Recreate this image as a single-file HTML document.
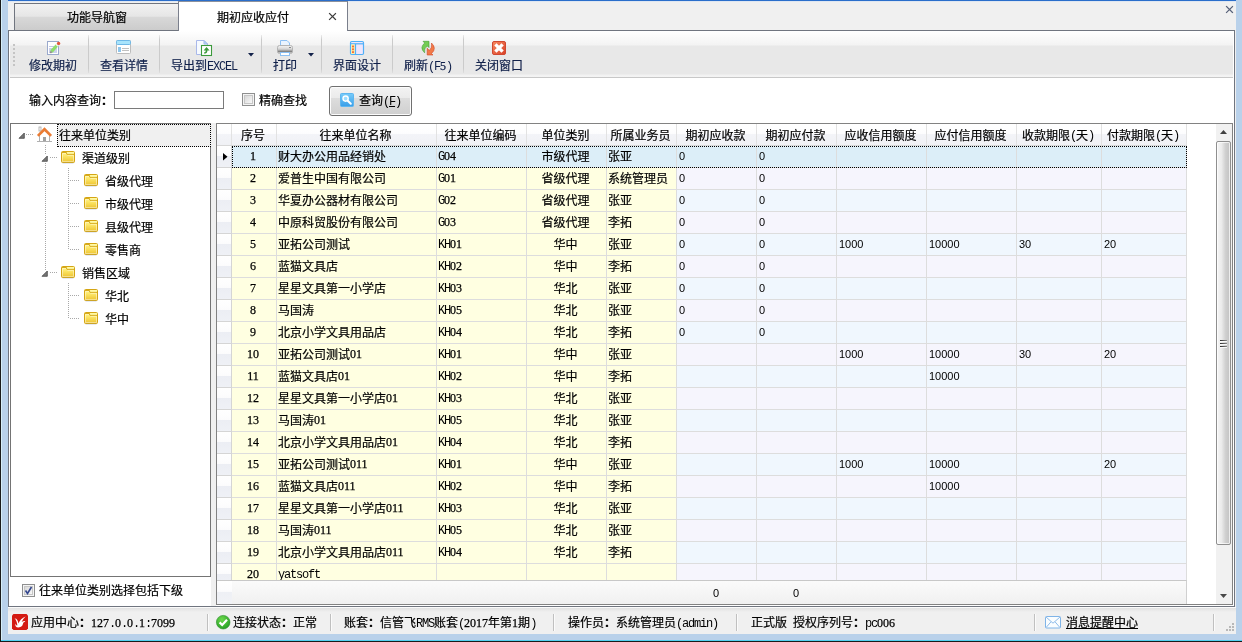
<!DOCTYPE html>
<html lang="zh-CN"><head><meta charset="utf-8"><title>期初应收应付</title>
<style>
html,body{margin:0;padding:0;}
body{width:1242px;height:642px;overflow:hidden;position:relative;background:#f0f0f0;
 font-family:"Liberation Sans","Noto Sans CJK SC",sans-serif;font-size:12px;line-height:14px;color:#000;-webkit-text-stroke:0.2px currentColor;}
.m,.n{-webkit-text-stroke:0;}
.d{-webkit-text-stroke:0.25px currentColor;}
div,span{box-sizing:border-box;}
#app{position:absolute;left:0;top:0;width:1242px;height:642px;will-change:transform;}
.a{position:absolute;}
.t{position:absolute;white-space:nowrap;height:14px;line-height:14px;margin-top:1px;}
.m{font-family:"Liberation Mono",monospace;font-size:12px;letter-spacing:-1.2px;}
.n{font-family:"Liberation Sans",sans-serif;font-size:11px;}
.d{font-family:"Liberation Serif",serif;font-size:12px;}
.tb{color:#10204a;}
.sep{position:absolute;top:35px;width:1px;height:38px;background:linear-gradient(rgba(200,200,200,.3),#cbcbcb 12%,#cbcbcb 88%,rgba(200,200,200,.3));}
.ssep{position:absolute;top:614px;width:2px;height:17px;border-left:1px solid #c0c0c0;border-right:1px solid #fbfbfb;}
svg{position:absolute;overflow:visible;}
.hc{position:absolute;top:124px;height:21px;border-right:1px solid #e2e2e2;background:linear-gradient(#ffffff 0%,#fdfdfe 45%,#f3f4f8 50%,#f0f1f5 100%);text-align:center;line-height:21px;padding-top:2px;padding-right:2px;white-space:nowrap;}
.row{position:absolute;left:217px;width:970px;height:22px;}
.c{position:absolute;top:0;height:22px;border-right:1px solid #dddddd;border-bottom:1px solid #dddddd;line-height:21px;white-space:nowrap;padding-left:1px;padding-top:1px;overflow:hidden;}
.hc .m{position:relative;top:-1px;}
.c .m,.c .d{position:relative;top:-1px;}
.c .n{position:relative;top:-1px;}
.y{background:#ffffe1;}
.b1{background:#f0f7fe;}
.b2{background:#f6f5fd;}
.sel .c:not(.ind){background:#dceef8;}
.ind{background:linear-gradient(#ffffff 0%,#fcfcfd 45%,#eceef4 50%,#eff1f6 100%);border-right:1px solid #d5d5d5;border-bottom:1px solid #d5d5d5;}
.c.ctr{text-align:center;padding-left:0;padding-right:2px;}
.c.num{padding-left:2px;}
.tn{position:absolute;white-space:nowrap;height:14px;line-height:14px;margin-top:1px;}
.hd{position:absolute;height:1px;background-image:linear-gradient(90deg,#a8a8a8 50%,transparent 50%);background-size:2px 1px;}
.vd{position:absolute;width:1px;background-image:linear-gradient(180deg,#a8a8a8 50%,transparent 50%);background-size:1px 2px;}
</style></head>
<body>
<svg width="0" height="0" style="position:absolute"><defs>
<linearGradient id="fg" x1="0" y1="0" x2="0" y2="1"><stop offset="0" stop-color="#fff38e"/><stop offset="0.35" stop-color="#fde96c"/><stop offset="1" stop-color="#edc22e"/></linearGradient>

</defs></svg>
<div id="app">
<div class="a" style="left:0;top:0;width:8px;height:642px;background:#b9d1ea;"></div>
<div class="a" style="left:0;top:0;width:1px;height:642px;background:#1a1a1a;"></div>
<div class="a" style="left:1px;top:0;width:1px;height:642px;background:#d6eef8;"></div>
<div class="a" style="left:1236px;top:0;width:6px;height:642px;background:#b9d1ea;"></div>
<div class="a" style="left:2px;top:634px;width:1240px;height:8px;background:#b9d1ea;"></div>
<div class="a" style="left:1px;top:640px;width:1241px;height:1px;background:#52d0f0;"></div>
<div class="a" style="left:0;top:641px;width:1242px;height:1px;background:#1a1a1a;"></div>
<div class="a" style="left:8px;top:0;width:1228px;height:1px;background:#2a6ecb;"></div>
<div class="a" style="left:8px;top:1px;width:1228px;height:1px;background:#dfe7f2;"></div>
<div class="a" style="left:14px;top:3px;width:165px;height:28px;border:1px solid #70757f;border-bottom:none;background:linear-gradient(#f2f2f2 0%,#e6e6e6 45%,#d8d8d8 50%,#cbcbcb 100%);"></div>
<div class="t" style="left:67px;top:10px;">功能导航窗</div>
<div class="a" style="left:8px;top:30px;width:1227px;height:577px;border:1px solid #70757f;background:#fff;"></div>
<div class="a" style="left:178px;top:1px;width:170px;height:30px;border-right:1px solid #7a7f8c;border-left:1px solid #7a7f8c;border-top:1px solid #8c919c;background:#fff;"></div>
<div class="t" style="left:217px;top:10px;">期初应收应付</div>
<svg style="left:329px;top:13px;" width="8" height="8"><path d="M0.5 0.5L6.5 6.5M6.5 0.5L0.5 6.5" stroke="#3c3c3c" stroke-width="1.15" stroke-linecap="square" fill="none"/></svg>
<svg style="left:1226px;top:6px;" width="8" height="8"><path d="M0.5 0.5L6.5 6.5M6.5 0.5L0.5 6.5" stroke="#566078" stroke-width="1.15" stroke-linecap="square" fill="none"/></svg>
<div class="a" style="left:10px;top:31px;width:1223px;height:46px;background:linear-gradient(#ffffff 0px,#f3f3f3 14px,#e8e8e8 15px,#e8e8e8 43px,#f2f2f2 44px,#f4f4f4 46px);"></div>
<div class="a" style="left:10px;top:77px;width:1223px;height:1px;background:#c8c8c8;"></div>
<div class="a" style="left:13px;top:44px;width:2px;height:2px;background:#c4c4c4;"></div>
<div class="a" style="left:13px;top:48px;width:2px;height:2px;background:#c4c4c4;"></div>
<div class="a" style="left:13px;top:52px;width:2px;height:2px;background:#c4c4c4;"></div>
<div class="a" style="left:13px;top:56px;width:2px;height:2px;background:#c4c4c4;"></div>
<div class="a" style="left:13px;top:60px;width:2px;height:2px;background:#c4c4c4;"></div>
<div class="a" style="left:13px;top:64px;width:2px;height:2px;background:#c4c4c4;"></div>
<div class="sep" style="left:88px;"></div>
<div class="sep" style="left:159px;"></div>
<div class="sep" style="left:261px;"></div>
<div class="sep" style="left:321px;"></div>
<div class="sep" style="left:392px;"></div>
<div class="sep" style="left:463px;"></div>
<div class="t tb" style="left:29px;top:58px;">修改期初</div>
<div class="t tb" style="left:100px;top:58px;">查看详情</div>
<div class="t tb" style="left:171px;top:58px;">导出到<span class="m">EXCEL</span></div>
<div class="t tb" style="left:273px;top:58px;">打印</div>
<div class="t tb" style="left:333px;top:58px;">界面设计</div>
<div class="t tb" style="left:404px;top:58px;">刷新<span class="m">(F</span><span class="d">5</span><span class="m">)</span></div>
<div class="t tb" style="left:475px;top:58px;">关闭窗口</div>
<svg style="left:248px;top:53px;" width="6" height="4"><path d="M0 0H6L3 3.5Z" fill="#14234b"/></svg>
<svg style="left:308px;top:53px;" width="6" height="4"><path d="M0 0H6L3 3.5Z" fill="#14234b"/></svg>
<div class="t" style="left:29px;top:93px;">输入内容查询<b>：</b></div>
<div class="a" style="left:114px;top:91px;width:110px;height:18px;border:1px solid #7a7a7a;background:#fff;"></div>
<div class="a" style="left:242px;top:93px;width:13px;height:13px;border:1px solid #8e8f8f;background:#f4f4f4;"><div class="a" style="left:1px;top:1px;width:9px;height:9px;border:1px solid #c6c6c6;background:linear-gradient(135deg,#d8d8d8,#f8f8f8);"></div></div>
<div class="t" style="left:259px;top:93px;">精确查找</div>
<div class="a" style="left:329px;top:86px;width:83px;height:30px;border:1px solid #707070;border-radius:3px;background:linear-gradient(#f3f3f3 0%,#ebebeb 38%,#dddddd 40%,#cfcfcf 100%);box-shadow:inset 0 0 0 1px #fcfcfc;"></div>
<div class="t" style="left:359px;top:93px;">查询<span class="m">(<u>F</u>)</span></div>

<svg style="left:45px;top:40px;" width="16" height="16" viewBox="0 0 16 16"><rect x="2.5" y="1.5" width="11" height="13" fill="#fff" stroke="#9aa9cc"/><rect x="4" y="8" width="8" height="5" fill="#ccd1ec"/><path d="M4 6.5H9" stroke="#c0c8e4"/><path d="M6.4 11.6L12 5.2" stroke="#8ede6c" stroke-width="3.2"/><path d="M11.6 5.7L12.7 4.4" stroke="#f0f4f0" stroke-width="3.2"/><circle cx="13.6" cy="3.4" r="1.7" fill="#e2583c"/><path d="M5.3 12.9L6.5 11.5" stroke="#8a8a80" stroke-width="1.8"/></svg>
<svg style="left:116px;top:40px;" width="16" height="16" viewBox="0 0 16 16"><rect x="0.5" y="0.5" width="14" height="13" rx="1" fill="#fff" stroke="#bcbcbc"/><rect x="0.5" y="0.5" width="14" height="4" rx="1" fill="#a8e4fc" stroke="#6fb8e6"/><rect x="2" y="7" width="3" height="5" fill="#8fc6ec"/><path d="M6 8.5H13M6 10.5H13" stroke="#c0c0c0"/></svg>
<svg style="left:196px;top:40px;" width="17" height="16" viewBox="0 0 17 16"><path d="M0.5 0.5H8L11.5 4V14.5H0.5Z" fill="#f6faff" stroke="#a9b8ea"/><path d="M8 0.5V4H11.5Z" fill="#a8dcfc" stroke="#a9b8ea"/><rect x="5.5" y="5.5" width="10" height="10" fill="#fff" stroke="#3c9a3c" stroke-width="1.1"/><path d="M10.5 7L13.6 10.4H11.4Q11.4 13.6 8 13.6V12.6Q9.8 12.4 9.8 10.4H7.6Z" fill="#3c9a3c"/></svg>
<svg style="left:277px;top:40px;" width="16" height="16" viewBox="0 0 16 16"><defs><linearGradient id="pg" x1="0" y1="0" x2="0" y2="1"><stop offset="0" stop-color="#f6f6f6"/><stop offset="0.45" stop-color="#d4d4d4"/><stop offset="0.78" stop-color="#7c7c7c"/><stop offset="0.9" stop-color="#c8c8c8"/><stop offset="1" stop-color="#e8e8e8"/></linearGradient></defs><path d="M3.5 0.5H10L12.5 3V6H3.5Z" fill="#eaf4ff" stroke="#8cc0f4"/><rect x="0.5" y="5.5" width="15" height="8" rx="2" fill="url(#pg)" stroke="#b4b4b4"/><rect x="3.5" y="12.5" width="9" height="3" fill="#fff" stroke="#8cc0f4"/><rect x="12.5" y="7" width="1" height="1" fill="#333"/></svg>
<svg style="left:350px;top:41px;" width="15" height="15" viewBox="0 0 15 15"><rect x="0.5" y="0.5" width="13" height="13" rx="1.2" fill="#eee6fc" stroke="#4fb0f8" stroke-width="1.2"/><path d="M0.5 2.8H13.5" stroke="#4fb0f8" stroke-width="1.2"/><rect x="1.2" y="3.4" width="3.6" height="9.6" fill="#fdf0a0"/><path d="M5.5 3V13.5" stroke="#4fb0f8" stroke-width="1.2"/><rect x="2" y="4.6" width="2" height="1.8" fill="#f8703c"/><rect x="2" y="7.4" width="2" height="1.8" fill="#f8703c"/><rect x="2" y="10.2" width="2" height="1.8" fill="#f8703c"/></svg>
<svg style="left:420px;top:40px;" width="16" height="16" viewBox="0 0 16 16"><path d="M3 1.3H9V7.6L7.3 5.9Q3.6 8.4 4.6 12.8Q-0.8 7.6 4.7 3Z" fill="#74cc54" stroke="#3fa030" stroke-width="0.6"/><path d="M13 15H7.2V8.2L9.3 10.5Q12.4 8 11.5 3Q17.2 8.5 11.5 13.5Z" fill="#f27a48" stroke="#d04424" stroke-width="0.6"/></svg>
<svg style="left:492px;top:41px;" width="15" height="15" viewBox="0 0 15 15"><defs><linearGradient id="rg" x1="0" y1="0" x2="1" y2="1"><stop offset="0" stop-color="#f88a60"/><stop offset="1" stop-color="#d84028"/></linearGradient></defs><rect x="0.5" y="0.5" width="13" height="13" rx="1.5" fill="url(#rg)" stroke="#d04830"/><path d="M3.4 3.4L10.6 10.6M10.6 3.4L3.4 10.6" stroke="#fff" stroke-width="3.3"/></svg>
<svg style="left:340px;top:93px;" width="14" height="14" viewBox="0 0 14 14"><defs><linearGradient id="bg" x1="0" y1="0" x2="0" y2="1"><stop offset="0" stop-color="#78ccfa"/><stop offset="1" stop-color="#3a9ee8"/></linearGradient></defs><rect x="0.5" y="0.5" width="13" height="13" rx="1" fill="url(#bg)" stroke="#5eb6f0"/><circle cx="5.6" cy="5.6" r="2.6" fill="#9cdcff" stroke="#fff" stroke-width="1.4"/><path d="M7.8 7.8L10.8 10.8" stroke="#fff" stroke-width="2" stroke-linecap="round"/></svg>

<div class="a" style="left:10px;top:123px;width:201px;height:454px;border:1px solid #747474;background:#fff;"></div>
<div class="a" style="left:57px;top:124px;width:154px;height:23px;border:1px dotted #000;background:#f0f0f0;"></div>
<div class="tn" style="left:59px;top:128px;">往来单位类别</div>
<svg style="left:18px;top:132px;" width="7" height="7"><path d="M6.3 1V6.3H1Z" fill="#777" stroke="#484848" stroke-width="0.8"/></svg>
<div class="hd" style="left:26px;top:134px;width:8px;"></div>
<svg style="left:36px;top:126px;" width="17" height="16" viewBox="0 0 17 16"><rect x="3" y="1" width="2" height="4" fill="#fff" stroke="#a8a8a8" stroke-width="0.8"/><path d="M3.5 8.5V15.5H13.5V8.5L8.5 4Z" fill="#fff" stroke="#b0b0b0"/><rect x="7" y="11" width="3" height="4.5" fill="#a0a0a0"/><path d="M1 15.5H16" stroke="#b0b0b0"/><path d="M1.9 9.9L8.5 3.2L15.1 9.9" stroke="#ea7c34" stroke-width="2.7" fill="none" stroke-linejoin="miter"/></svg>
<div class="tn" style="left:82px;top:151px;">渠道级别</div>
<svg style="left:41px;top:155px;" width="7" height="7"><path d="M6.3 1V6.3H1Z" fill="#777" stroke="#484848" stroke-width="0.8"/></svg>
<div class="hd" style="left:50px;top:157px;width:8px;"></div>
<svg style="left:61px;top:151px;" width="14" height="12"><rect x="0.5" y="0.5" width="13" height="11" rx="1" fill="url(#fg)" stroke="#d4a514"/><rect x="1" y="1" width="4.4" height="1" fill="#d9ab1c"/><rect x="6.2" y="1.1" width="6.8" height="1.8" fill="#fffaa8"/><path d="M5 1.2L6 3.4H13" stroke="#d4a514" stroke-width="0.9" fill="none"/><path d="M1.5 10.5V2.6H5M6.4 4.4H12.5V10.5H1.5" stroke="rgba(255,255,255,.55)" stroke-width="0.8" fill="none"/><path d="M1.5 12.2H12.5" stroke="rgba(150,165,200,.45)" stroke-width="0.8"/></svg>
<div class="tn" style="left:105px;top:174px;">省级代理</div>
<div class="hd" style="left:70px;top:180px;width:10px;"></div>
<svg style="left:84px;top:174px;" width="14" height="12"><rect x="0.5" y="0.5" width="13" height="11" rx="1" fill="url(#fg)" stroke="#d4a514"/><rect x="1" y="1" width="4.4" height="1" fill="#d9ab1c"/><rect x="6.2" y="1.1" width="6.8" height="1.8" fill="#fffaa8"/><path d="M5 1.2L6 3.4H13" stroke="#d4a514" stroke-width="0.9" fill="none"/><path d="M1.5 10.5V2.6H5M6.4 4.4H12.5V10.5H1.5" stroke="rgba(255,255,255,.55)" stroke-width="0.8" fill="none"/><path d="M1.5 12.2H12.5" stroke="rgba(150,165,200,.45)" stroke-width="0.8"/></svg>
<div class="tn" style="left:105px;top:197px;">市级代理</div>
<div class="hd" style="left:70px;top:203px;width:10px;"></div>
<svg style="left:84px;top:197px;" width="14" height="12"><rect x="0.5" y="0.5" width="13" height="11" rx="1" fill="url(#fg)" stroke="#d4a514"/><rect x="1" y="1" width="4.4" height="1" fill="#d9ab1c"/><rect x="6.2" y="1.1" width="6.8" height="1.8" fill="#fffaa8"/><path d="M5 1.2L6 3.4H13" stroke="#d4a514" stroke-width="0.9" fill="none"/><path d="M1.5 10.5V2.6H5M6.4 4.4H12.5V10.5H1.5" stroke="rgba(255,255,255,.55)" stroke-width="0.8" fill="none"/><path d="M1.5 12.2H12.5" stroke="rgba(150,165,200,.45)" stroke-width="0.8"/></svg>
<div class="tn" style="left:105px;top:220px;">县级代理</div>
<div class="hd" style="left:70px;top:226px;width:10px;"></div>
<svg style="left:84px;top:220px;" width="14" height="12"><rect x="0.5" y="0.5" width="13" height="11" rx="1" fill="url(#fg)" stroke="#d4a514"/><rect x="1" y="1" width="4.4" height="1" fill="#d9ab1c"/><rect x="6.2" y="1.1" width="6.8" height="1.8" fill="#fffaa8"/><path d="M5 1.2L6 3.4H13" stroke="#d4a514" stroke-width="0.9" fill="none"/><path d="M1.5 10.5V2.6H5M6.4 4.4H12.5V10.5H1.5" stroke="rgba(255,255,255,.55)" stroke-width="0.8" fill="none"/><path d="M1.5 12.2H12.5" stroke="rgba(150,165,200,.45)" stroke-width="0.8"/></svg>
<div class="tn" style="left:105px;top:243px;">零售商</div>
<div class="hd" style="left:70px;top:249px;width:10px;"></div>
<svg style="left:84px;top:243px;" width="14" height="12"><rect x="0.5" y="0.5" width="13" height="11" rx="1" fill="url(#fg)" stroke="#d4a514"/><rect x="1" y="1" width="4.4" height="1" fill="#d9ab1c"/><rect x="6.2" y="1.1" width="6.8" height="1.8" fill="#fffaa8"/><path d="M5 1.2L6 3.4H13" stroke="#d4a514" stroke-width="0.9" fill="none"/><path d="M1.5 10.5V2.6H5M6.4 4.4H12.5V10.5H1.5" stroke="rgba(255,255,255,.55)" stroke-width="0.8" fill="none"/><path d="M1.5 12.2H12.5" stroke="rgba(150,165,200,.45)" stroke-width="0.8"/></svg>
<div class="tn" style="left:82px;top:266px;">销售区域</div>
<svg style="left:41px;top:270px;" width="7" height="7"><path d="M6.3 1V6.3H1Z" fill="#777" stroke="#484848" stroke-width="0.8"/></svg>
<div class="hd" style="left:50px;top:272px;width:8px;"></div>
<svg style="left:61px;top:266px;" width="14" height="12"><rect x="0.5" y="0.5" width="13" height="11" rx="1" fill="url(#fg)" stroke="#d4a514"/><rect x="1" y="1" width="4.4" height="1" fill="#d9ab1c"/><rect x="6.2" y="1.1" width="6.8" height="1.8" fill="#fffaa8"/><path d="M5 1.2L6 3.4H13" stroke="#d4a514" stroke-width="0.9" fill="none"/><path d="M1.5 10.5V2.6H5M6.4 4.4H12.5V10.5H1.5" stroke="rgba(255,255,255,.55)" stroke-width="0.8" fill="none"/><path d="M1.5 12.2H12.5" stroke="rgba(150,165,200,.45)" stroke-width="0.8"/></svg>
<div class="tn" style="left:105px;top:289px;">华北</div>
<div class="hd" style="left:70px;top:295px;width:10px;"></div>
<svg style="left:84px;top:289px;" width="14" height="12"><rect x="0.5" y="0.5" width="13" height="11" rx="1" fill="url(#fg)" stroke="#d4a514"/><rect x="1" y="1" width="4.4" height="1" fill="#d9ab1c"/><rect x="6.2" y="1.1" width="6.8" height="1.8" fill="#fffaa8"/><path d="M5 1.2L6 3.4H13" stroke="#d4a514" stroke-width="0.9" fill="none"/><path d="M1.5 10.5V2.6H5M6.4 4.4H12.5V10.5H1.5" stroke="rgba(255,255,255,.55)" stroke-width="0.8" fill="none"/><path d="M1.5 12.2H12.5" stroke="rgba(150,165,200,.45)" stroke-width="0.8"/></svg>
<div class="tn" style="left:105px;top:312px;">华中</div>
<div class="hd" style="left:70px;top:318px;width:10px;"></div>
<svg style="left:84px;top:312px;" width="14" height="12"><rect x="0.5" y="0.5" width="13" height="11" rx="1" fill="url(#fg)" stroke="#d4a514"/><rect x="1" y="1" width="4.4" height="1" fill="#d9ab1c"/><rect x="6.2" y="1.1" width="6.8" height="1.8" fill="#fffaa8"/><path d="M5 1.2L6 3.4H13" stroke="#d4a514" stroke-width="0.9" fill="none"/><path d="M1.5 10.5V2.6H5M6.4 4.4H12.5V10.5H1.5" stroke="rgba(255,255,255,.55)" stroke-width="0.8" fill="none"/><path d="M1.5 12.2H12.5" stroke="rgba(150,165,200,.45)" stroke-width="0.8"/></svg>
<div class="vd" style="left:45px;top:145px;height:10px;"></div>
<div class="vd" style="left:45px;top:163px;height:107px;"></div>
<div class="vd" style="left:68px;top:168px;height:82px;"></div>
<div class="vd" style="left:68px;top:283px;height:36px;"></div>
<div class="a" style="left:22px;top:584px;width:13px;height:13px;border:1px solid #8e8f8f;background:#f4f4f4;"><div class="a" style="left:1px;top:1px;width:9px;height:9px;border:1px solid #c6c6c6;background:linear-gradient(135deg,#d8d8d8,#f8f8f8);"></div><svg style="left:1px;top:1px;" width="9" height="9"><path d="M1.5 4.5L3.5 7.5L7.5 1" stroke="#34478e" stroke-width="1.6" fill="none"/></svg></div>
<div class="t" style="left:39px;top:583px;">往来单位类别选择包括下级</div>
<div class="a" style="left:211px;top:123px;width:5px;height:483px;background:#f0f0f0;"></div>
<div class="a" style="left:216px;top:123px;width:1017px;height:482px;border:1px solid #828282;background:#fff;"></div>
<div class="hc" style="left:217px;width:15px;"></div>
<div class="hc" style="left:232px;width:45px;">序号</div>
<div class="hc" style="left:277px;width:160px;">往来单位名称</div>
<div class="hc" style="left:437px;width:90px;">往来单位编码</div>
<div class="hc" style="left:527px;width:80px;">单位类别</div>
<div class="hc" style="left:607px;width:70px;">所属业务员</div>
<div class="hc" style="left:677px;width:80px;">期初应收款</div>
<div class="hc" style="left:757px;width:80px;">期初应付款</div>
<div class="hc" style="left:837px;width:90px;">应收信用额度</div>
<div class="hc" style="left:927px;width:90px;">应付信用额度</div>
<div class="hc" style="left:1017px;width:85px;">收款期限<span class="m">(</span>天<span class="m">)</span></div>
<div class="hc" style="left:1102px;width:85px;">付款期限<span class="m">(</span>天<span class="m">)</span></div>
<div class="a" style="left:217px;top:145px;width:970px;height:1px;background:#d8d8d8;"></div>
<div class="a" style="left:217px;top:146px;width:970px;height:434px;overflow:hidden;">
<div class="row sel" style="left:0;top:0px;">
<div class="c ind" style="left:0;width:15px;padding:0;"></div>
<div class="c y ctr" style="left:15px;width:45px;"><span class="d">1</span></div>
<div class="c y" style="left:60px;width:160px;">财大办公用品经销处</div>
<div class="c y" style="left:220px;width:90px;"><span class="m">G</span><span class="d">04</span></div>
<div class="c y ctr" style="left:310px;width:80px;">市级代理</div>
<div class="c y" style="left:390px;width:70px;">张亚</div>
<div class="c num b1" style="left:460px;width:80px;"><span class="n">0</span></div>
<div class="c num b1" style="left:540px;width:80px;"><span class="n">0</span></div>
<div class="c num b1" style="left:620px;width:90px;"></div>
<div class="c num b1" style="left:710px;width:90px;"></div>
<div class="c num b1" style="left:800px;width:85px;"></div>
<div class="c num b1" style="left:885px;width:85px;"></div>
</div>
<div class="row" style="left:0;top:22px;">
<div class="c ind" style="left:0;width:15px;padding:0;"></div>
<div class="c y ctr" style="left:15px;width:45px;"><span class="d">2</span></div>
<div class="c y" style="left:60px;width:160px;">爱普生中国有限公司</div>
<div class="c y" style="left:220px;width:90px;"><span class="m">G</span><span class="d">01</span></div>
<div class="c y ctr" style="left:310px;width:80px;">省级代理</div>
<div class="c y" style="left:390px;width:70px;">系统管理员</div>
<div class="c num b2" style="left:460px;width:80px;"><span class="n">0</span></div>
<div class="c num b2" style="left:540px;width:80px;"><span class="n">0</span></div>
<div class="c num b2" style="left:620px;width:90px;"></div>
<div class="c num b2" style="left:710px;width:90px;"></div>
<div class="c num b2" style="left:800px;width:85px;"></div>
<div class="c num b2" style="left:885px;width:85px;"></div>
</div>
<div class="row" style="left:0;top:44px;">
<div class="c ind" style="left:0;width:15px;padding:0;"></div>
<div class="c y ctr" style="left:15px;width:45px;"><span class="d">3</span></div>
<div class="c y" style="left:60px;width:160px;">华夏办公器材有限公司</div>
<div class="c y" style="left:220px;width:90px;"><span class="m">G</span><span class="d">02</span></div>
<div class="c y ctr" style="left:310px;width:80px;">省级代理</div>
<div class="c y" style="left:390px;width:70px;">张亚</div>
<div class="c num b1" style="left:460px;width:80px;"><span class="n">0</span></div>
<div class="c num b1" style="left:540px;width:80px;"><span class="n">0</span></div>
<div class="c num b1" style="left:620px;width:90px;"></div>
<div class="c num b1" style="left:710px;width:90px;"></div>
<div class="c num b1" style="left:800px;width:85px;"></div>
<div class="c num b1" style="left:885px;width:85px;"></div>
</div>
<div class="row" style="left:0;top:66px;">
<div class="c ind" style="left:0;width:15px;padding:0;"></div>
<div class="c y ctr" style="left:15px;width:45px;"><span class="d">4</span></div>
<div class="c y" style="left:60px;width:160px;">中原科贸股份有限公司</div>
<div class="c y" style="left:220px;width:90px;"><span class="m">G</span><span class="d">03</span></div>
<div class="c y ctr" style="left:310px;width:80px;">省级代理</div>
<div class="c y" style="left:390px;width:70px;">李拓</div>
<div class="c num b2" style="left:460px;width:80px;"><span class="n">0</span></div>
<div class="c num b2" style="left:540px;width:80px;"><span class="n">0</span></div>
<div class="c num b2" style="left:620px;width:90px;"></div>
<div class="c num b2" style="left:710px;width:90px;"></div>
<div class="c num b2" style="left:800px;width:85px;"></div>
<div class="c num b2" style="left:885px;width:85px;"></div>
</div>
<div class="row" style="left:0;top:88px;">
<div class="c ind" style="left:0;width:15px;padding:0;"></div>
<div class="c y ctr" style="left:15px;width:45px;"><span class="d">5</span></div>
<div class="c y" style="left:60px;width:160px;">亚拓公司测试</div>
<div class="c y" style="left:220px;width:90px;"><span class="m">KH</span><span class="d">01</span></div>
<div class="c y ctr" style="left:310px;width:80px;">华中</div>
<div class="c y" style="left:390px;width:70px;">张亚</div>
<div class="c num b1" style="left:460px;width:80px;"><span class="n">0</span></div>
<div class="c num b1" style="left:540px;width:80px;"><span class="n">0</span></div>
<div class="c num b1" style="left:620px;width:90px;"><span class="n">1000</span></div>
<div class="c num b1" style="left:710px;width:90px;"><span class="n">10000</span></div>
<div class="c num b1" style="left:800px;width:85px;"><span class="n">30</span></div>
<div class="c num b1" style="left:885px;width:85px;"><span class="n">20</span></div>
</div>
<div class="row" style="left:0;top:110px;">
<div class="c ind" style="left:0;width:15px;padding:0;"></div>
<div class="c y ctr" style="left:15px;width:45px;"><span class="d">6</span></div>
<div class="c y" style="left:60px;width:160px;">蓝猫文具店</div>
<div class="c y" style="left:220px;width:90px;"><span class="m">KH</span><span class="d">02</span></div>
<div class="c y ctr" style="left:310px;width:80px;">华中</div>
<div class="c y" style="left:390px;width:70px;">李拓</div>
<div class="c num b2" style="left:460px;width:80px;"><span class="n">0</span></div>
<div class="c num b2" style="left:540px;width:80px;"><span class="n">0</span></div>
<div class="c num b2" style="left:620px;width:90px;"></div>
<div class="c num b2" style="left:710px;width:90px;"></div>
<div class="c num b2" style="left:800px;width:85px;"></div>
<div class="c num b2" style="left:885px;width:85px;"></div>
</div>
<div class="row" style="left:0;top:132px;">
<div class="c ind" style="left:0;width:15px;padding:0;"></div>
<div class="c y ctr" style="left:15px;width:45px;"><span class="d">7</span></div>
<div class="c y" style="left:60px;width:160px;">星星文具第一小学店</div>
<div class="c y" style="left:220px;width:90px;"><span class="m">KH</span><span class="d">03</span></div>
<div class="c y ctr" style="left:310px;width:80px;">华北</div>
<div class="c y" style="left:390px;width:70px;">张亚</div>
<div class="c num b1" style="left:460px;width:80px;"><span class="n">0</span></div>
<div class="c num b1" style="left:540px;width:80px;"><span class="n">0</span></div>
<div class="c num b1" style="left:620px;width:90px;"></div>
<div class="c num b1" style="left:710px;width:90px;"></div>
<div class="c num b1" style="left:800px;width:85px;"></div>
<div class="c num b1" style="left:885px;width:85px;"></div>
</div>
<div class="row" style="left:0;top:154px;">
<div class="c ind" style="left:0;width:15px;padding:0;"></div>
<div class="c y ctr" style="left:15px;width:45px;"><span class="d">8</span></div>
<div class="c y" style="left:60px;width:160px;">马国涛</div>
<div class="c y" style="left:220px;width:90px;"><span class="m">KH</span><span class="d">05</span></div>
<div class="c y ctr" style="left:310px;width:80px;">华北</div>
<div class="c y" style="left:390px;width:70px;">张亚</div>
<div class="c num b2" style="left:460px;width:80px;"><span class="n">0</span></div>
<div class="c num b2" style="left:540px;width:80px;"><span class="n">0</span></div>
<div class="c num b2" style="left:620px;width:90px;"></div>
<div class="c num b2" style="left:710px;width:90px;"></div>
<div class="c num b2" style="left:800px;width:85px;"></div>
<div class="c num b2" style="left:885px;width:85px;"></div>
</div>
<div class="row" style="left:0;top:176px;">
<div class="c ind" style="left:0;width:15px;padding:0;"></div>
<div class="c y ctr" style="left:15px;width:45px;"><span class="d">9</span></div>
<div class="c y" style="left:60px;width:160px;">北京小学文具用品店</div>
<div class="c y" style="left:220px;width:90px;"><span class="m">KH</span><span class="d">04</span></div>
<div class="c y ctr" style="left:310px;width:80px;">华北</div>
<div class="c y" style="left:390px;width:70px;">李拓</div>
<div class="c num b1" style="left:460px;width:80px;"><span class="n">0</span></div>
<div class="c num b1" style="left:540px;width:80px;"><span class="n">0</span></div>
<div class="c num b1" style="left:620px;width:90px;"></div>
<div class="c num b1" style="left:710px;width:90px;"></div>
<div class="c num b1" style="left:800px;width:85px;"></div>
<div class="c num b1" style="left:885px;width:85px;"></div>
</div>
<div class="row" style="left:0;top:198px;">
<div class="c ind" style="left:0;width:15px;padding:0;"></div>
<div class="c y ctr" style="left:15px;width:45px;"><span class="d">10</span></div>
<div class="c y" style="left:60px;width:160px;">亚拓公司测试<span class="d">01</span></div>
<div class="c y" style="left:220px;width:90px;"><span class="m">KH</span><span class="d">01</span></div>
<div class="c y ctr" style="left:310px;width:80px;">华中</div>
<div class="c y" style="left:390px;width:70px;">张亚</div>
<div class="c num b2" style="left:460px;width:80px;"></div>
<div class="c num b2" style="left:540px;width:80px;"></div>
<div class="c num b2" style="left:620px;width:90px;"><span class="n">1000</span></div>
<div class="c num b2" style="left:710px;width:90px;"><span class="n">10000</span></div>
<div class="c num b2" style="left:800px;width:85px;"><span class="n">30</span></div>
<div class="c num b2" style="left:885px;width:85px;"><span class="n">20</span></div>
</div>
<div class="row" style="left:0;top:220px;">
<div class="c ind" style="left:0;width:15px;padding:0;"></div>
<div class="c y ctr" style="left:15px;width:45px;"><span class="d">11</span></div>
<div class="c y" style="left:60px;width:160px;">蓝猫文具店<span class="d">01</span></div>
<div class="c y" style="left:220px;width:90px;"><span class="m">KH</span><span class="d">02</span></div>
<div class="c y ctr" style="left:310px;width:80px;">华中</div>
<div class="c y" style="left:390px;width:70px;">李拓</div>
<div class="c num b1" style="left:460px;width:80px;"></div>
<div class="c num b1" style="left:540px;width:80px;"></div>
<div class="c num b1" style="left:620px;width:90px;"></div>
<div class="c num b1" style="left:710px;width:90px;"><span class="n">10000</span></div>
<div class="c num b1" style="left:800px;width:85px;"></div>
<div class="c num b1" style="left:885px;width:85px;"></div>
</div>
<div class="row" style="left:0;top:242px;">
<div class="c ind" style="left:0;width:15px;padding:0;"></div>
<div class="c y ctr" style="left:15px;width:45px;"><span class="d">12</span></div>
<div class="c y" style="left:60px;width:160px;">星星文具第一小学店<span class="d">01</span></div>
<div class="c y" style="left:220px;width:90px;"><span class="m">KH</span><span class="d">03</span></div>
<div class="c y ctr" style="left:310px;width:80px;">华北</div>
<div class="c y" style="left:390px;width:70px;">张亚</div>
<div class="c num b2" style="left:460px;width:80px;"></div>
<div class="c num b2" style="left:540px;width:80px;"></div>
<div class="c num b2" style="left:620px;width:90px;"></div>
<div class="c num b2" style="left:710px;width:90px;"></div>
<div class="c num b2" style="left:800px;width:85px;"></div>
<div class="c num b2" style="left:885px;width:85px;"></div>
</div>
<div class="row" style="left:0;top:264px;">
<div class="c ind" style="left:0;width:15px;padding:0;"></div>
<div class="c y ctr" style="left:15px;width:45px;"><span class="d">13</span></div>
<div class="c y" style="left:60px;width:160px;">马国涛<span class="d">01</span></div>
<div class="c y" style="left:220px;width:90px;"><span class="m">KH</span><span class="d">05</span></div>
<div class="c y ctr" style="left:310px;width:80px;">华北</div>
<div class="c y" style="left:390px;width:70px;">张亚</div>
<div class="c num b1" style="left:460px;width:80px;"></div>
<div class="c num b1" style="left:540px;width:80px;"></div>
<div class="c num b1" style="left:620px;width:90px;"></div>
<div class="c num b1" style="left:710px;width:90px;"></div>
<div class="c num b1" style="left:800px;width:85px;"></div>
<div class="c num b1" style="left:885px;width:85px;"></div>
</div>
<div class="row" style="left:0;top:286px;">
<div class="c ind" style="left:0;width:15px;padding:0;"></div>
<div class="c y ctr" style="left:15px;width:45px;"><span class="d">14</span></div>
<div class="c y" style="left:60px;width:160px;">北京小学文具用品店<span class="d">01</span></div>
<div class="c y" style="left:220px;width:90px;"><span class="m">KH</span><span class="d">04</span></div>
<div class="c y ctr" style="left:310px;width:80px;">华北</div>
<div class="c y" style="left:390px;width:70px;">李拓</div>
<div class="c num b2" style="left:460px;width:80px;"></div>
<div class="c num b2" style="left:540px;width:80px;"></div>
<div class="c num b2" style="left:620px;width:90px;"></div>
<div class="c num b2" style="left:710px;width:90px;"></div>
<div class="c num b2" style="left:800px;width:85px;"></div>
<div class="c num b2" style="left:885px;width:85px;"></div>
</div>
<div class="row" style="left:0;top:308px;">
<div class="c ind" style="left:0;width:15px;padding:0;"></div>
<div class="c y ctr" style="left:15px;width:45px;"><span class="d">15</span></div>
<div class="c y" style="left:60px;width:160px;">亚拓公司测试<span class="d">011</span></div>
<div class="c y" style="left:220px;width:90px;"><span class="m">KH</span><span class="d">01</span></div>
<div class="c y ctr" style="left:310px;width:80px;">华中</div>
<div class="c y" style="left:390px;width:70px;">张亚</div>
<div class="c num b1" style="left:460px;width:80px;"></div>
<div class="c num b1" style="left:540px;width:80px;"></div>
<div class="c num b1" style="left:620px;width:90px;"><span class="n">1000</span></div>
<div class="c num b1" style="left:710px;width:90px;"><span class="n">10000</span></div>
<div class="c num b1" style="left:800px;width:85px;"></div>
<div class="c num b1" style="left:885px;width:85px;"><span class="n">20</span></div>
</div>
<div class="row" style="left:0;top:330px;">
<div class="c ind" style="left:0;width:15px;padding:0;"></div>
<div class="c y ctr" style="left:15px;width:45px;"><span class="d">16</span></div>
<div class="c y" style="left:60px;width:160px;">蓝猫文具店<span class="d">011</span></div>
<div class="c y" style="left:220px;width:90px;"><span class="m">KH</span><span class="d">02</span></div>
<div class="c y ctr" style="left:310px;width:80px;">华中</div>
<div class="c y" style="left:390px;width:70px;">李拓</div>
<div class="c num b2" style="left:460px;width:80px;"></div>
<div class="c num b2" style="left:540px;width:80px;"></div>
<div class="c num b2" style="left:620px;width:90px;"></div>
<div class="c num b2" style="left:710px;width:90px;"><span class="n">10000</span></div>
<div class="c num b2" style="left:800px;width:85px;"></div>
<div class="c num b2" style="left:885px;width:85px;"></div>
</div>
<div class="row" style="left:0;top:352px;">
<div class="c ind" style="left:0;width:15px;padding:0;"></div>
<div class="c y ctr" style="left:15px;width:45px;"><span class="d">17</span></div>
<div class="c y" style="left:60px;width:160px;">星星文具第一小学店<span class="d">011</span></div>
<div class="c y" style="left:220px;width:90px;"><span class="m">KH</span><span class="d">03</span></div>
<div class="c y ctr" style="left:310px;width:80px;">华北</div>
<div class="c y" style="left:390px;width:70px;">张亚</div>
<div class="c num b1" style="left:460px;width:80px;"></div>
<div class="c num b1" style="left:540px;width:80px;"></div>
<div class="c num b1" style="left:620px;width:90px;"></div>
<div class="c num b1" style="left:710px;width:90px;"></div>
<div class="c num b1" style="left:800px;width:85px;"></div>
<div class="c num b1" style="left:885px;width:85px;"></div>
</div>
<div class="row" style="left:0;top:374px;">
<div class="c ind" style="left:0;width:15px;padding:0;"></div>
<div class="c y ctr" style="left:15px;width:45px;"><span class="d">18</span></div>
<div class="c y" style="left:60px;width:160px;">马国涛<span class="d">011</span></div>
<div class="c y" style="left:220px;width:90px;"><span class="m">KH</span><span class="d">05</span></div>
<div class="c y ctr" style="left:310px;width:80px;">华北</div>
<div class="c y" style="left:390px;width:70px;">张亚</div>
<div class="c num b2" style="left:460px;width:80px;"></div>
<div class="c num b2" style="left:540px;width:80px;"></div>
<div class="c num b2" style="left:620px;width:90px;"></div>
<div class="c num b2" style="left:710px;width:90px;"></div>
<div class="c num b2" style="left:800px;width:85px;"></div>
<div class="c num b2" style="left:885px;width:85px;"></div>
</div>
<div class="row" style="left:0;top:396px;">
<div class="c ind" style="left:0;width:15px;padding:0;"></div>
<div class="c y ctr" style="left:15px;width:45px;"><span class="d">19</span></div>
<div class="c y" style="left:60px;width:160px;">北京小学文具用品店<span class="d">011</span></div>
<div class="c y" style="left:220px;width:90px;"><span class="m">KH</span><span class="d">04</span></div>
<div class="c y ctr" style="left:310px;width:80px;">华北</div>
<div class="c y" style="left:390px;width:70px;">李拓</div>
<div class="c num b1" style="left:460px;width:80px;"></div>
<div class="c num b1" style="left:540px;width:80px;"></div>
<div class="c num b1" style="left:620px;width:90px;"></div>
<div class="c num b1" style="left:710px;width:90px;"></div>
<div class="c num b1" style="left:800px;width:85px;"></div>
<div class="c num b1" style="left:885px;width:85px;"></div>
</div>
<div class="row" style="left:0;top:418px;">
<div class="c ind" style="left:0;width:15px;padding:0;"></div>
<div class="c y ctr" style="left:15px;width:45px;"><span class="d">20</span></div>
<div class="c y" style="left:60px;width:160px;"><span class="m">yatsoft</span></div>
<div class="c y" style="left:220px;width:90px;"></div>
<div class="c y ctr" style="left:310px;width:80px;"></div>
<div class="c y" style="left:390px;width:70px;"></div>
<div class="c num b2" style="left:460px;width:80px;"></div>
<div class="c num b2" style="left:540px;width:80px;"></div>
<div class="c num b2" style="left:620px;width:90px;"></div>
<div class="c num b2" style="left:710px;width:90px;"></div>
<div class="c num b2" style="left:800px;width:85px;"></div>
<div class="c num b2" style="left:885px;width:85px;"></div>
</div>
</div>
<div class="a" style="left:232px;top:146px;width:955px;height:22px;border:1px dotted #000;"></div>
<svg style="left:223px;top:153px;" width="5" height="8"><path d="M0 0L4.5 3.75L0 7.5Z" fill="#000"/></svg>
<div class="a" style="left:217px;top:580px;width:970px;height:24px;background:linear-gradient(#fbfbfb,#f0f0f0);border-top:1px solid #c8c8c8;border-right:1px solid #d0d0d0;"></div>
<div class="a" style="left:217px;top:581px;width:15px;height:23px;background:linear-gradient(#ffffff 0%,#fcfcfd 45%,#eef0f5 50%,#f1f2f6 100%);"></div>
<div class="t n" style="left:713px;top:585px;">0</div>
<div class="t n" style="left:793px;top:585px;">0</div>
<div class="a" style="left:1216px;top:124px;width:16px;height:480px;background:#f1f1f1;"></div>
<svg style="left:1220px;top:130px;" width="7" height="4"><path d="M0 4H7L3.5 0Z" fill="#404040"/></svg>
<svg style="left:1220px;top:594px;" width="7" height="4"><path d="M0 0H7L3.5 4Z" fill="#484848"/></svg>
<div class="a" style="left:1216px;top:141px;width:15px;height:404px;border:1px solid #8f8f8f;border-radius:2px;background:linear-gradient(90deg,#f6f6f6 0%,#ebebeb 35%,#d0d0d0 65%,#c2c2c2 100%);box-shadow:inset 0 0 0 1px rgba(255,255,255,.7);"></div>
<div class="a" style="left:1220px;top:340px;width:7px;height:1px;background:linear-gradient(90deg,#2a2a2a,#8a8a8a);"></div>
<div class="a" style="left:1220px;top:341px;width:7px;height:1px;background:rgba(255,255,255,.8);"></div>
<div class="a" style="left:1220px;top:343px;width:7px;height:1px;background:linear-gradient(90deg,#2a2a2a,#8a8a8a);"></div>
<div class="a" style="left:1220px;top:344px;width:7px;height:1px;background:rgba(255,255,255,.8);"></div>
<div class="a" style="left:1220px;top:346px;width:7px;height:1px;background:linear-gradient(90deg,#2a2a2a,#8a8a8a);"></div>
<div class="a" style="left:1220px;top:347px;width:7px;height:1px;background:rgba(255,255,255,.8);"></div>
<div class="a" style="left:8px;top:608px;width:1228px;height:26px;background:linear-gradient(#e2e2e2 0px,#f0f0f0 4px,#f0f0f0 100%);"></div>
<div class="a" style="left:8px;top:607px;width:1228px;height:1px;background:#fafafa;"></div>
<div class="ssep" style="left:207px;"></div>
<div class="ssep" style="left:330px;"></div>
<div class="ssep" style="left:553px;"></div>
<div class="ssep" style="left:736px;"></div>
<div class="ssep" style="left:1034px;"></div>
<div class="ssep" style="left:1213px;"></div>
<div class="t" style="left:31px;top:615px;">应用中心<b>：</b><span class="d">127</span><span class="m">.</span><span class="d">0</span><span class="m">.</span><span class="d">0</span><span class="m">.</span><span class="d">1</span><span class="m">:</span><span class="d">7099</span></div>
<div class="t" style="left:233px;top:615px;">连接状态<b>：</b>正常</div>
<div class="t" style="left:344px;top:615px;">账套<b>：</b>信管飞<span class="m">RMS</span>账套<span class="m">(</span><span class="d">2017</span>年第<span class="d">1</span>期<span class="m">)</span></div>
<div class="t" style="left:568px;top:615px;">操作员<b>：</b>系统管理员<span class="m">(admin)</span></div>
<div class="t" style="left:751px;top:615px;">正式版<span class="m"> </span>授权序列号<b>：</b><span class="m">pc</span><span class="d">006</span></div>
<div class="t" style="left:1066px;top:615px;text-decoration:underline;">消息提醒中心</div>

<svg style="left:12px;top:614px;" width="16" height="16" viewBox="0 0 16 16"><path d="M1.5 0H14.5L16 1.5V14.5L14.5 16H1.5L0 14.5V1.5Z" fill="#d41a12"/><path d="M2.6 4.6Q5.6 4.4 6.4 9.6Q8.4 4.6 13.6 2.6Q10.6 5.4 9.6 8Q12.4 6.6 13.4 7.4Q10.8 8 10.8 10.2Q10.8 12.6 6.4 13.4Q2.8 13.2 3.4 9.4Q4 11.6 5.4 11.6Q4.8 6.4 2.6 4.6Z" fill="#fff"/></svg>
<svg style="left:216px;top:615px;" width="15" height="15" viewBox="0 0 15 15"><defs><radialGradient id="gg" cx="0.4" cy="0.3" r="0.8"><stop offset="0" stop-color="#6cd84c"/><stop offset="1" stop-color="#1f9a20"/></radialGradient></defs><circle cx="7.2" cy="7.2" r="6.8" fill="url(#gg)" stroke="#2a8c28" stroke-width="0.6"/><path d="M3.6 7.4L6.2 10L11 4.8" stroke="#fff" stroke-width="2.2" fill="none"/></svg>
<svg style="left:1045px;top:616px;" width="16" height="13" viewBox="0 0 16 13"><rect x="0.5" y="0.5" width="15" height="11.5" rx="1" fill="#fafdff" stroke="#7fb4e8"/><path d="M1 1L8 7.2L15 1M1 11.6L6 5.8M15 11.6L10 5.8" stroke="#8fbcea" fill="none"/></svg>

<div class="a" style="left:1232px;top:623px;width:2px;height:2px;background:#b8b8b8;"></div>
<div class="a" style="left:1229px;top:626px;width:2px;height:2px;background:#b8b8b8;"></div>
<div class="a" style="left:1232px;top:626px;width:2px;height:2px;background:#b8b8b8;"></div>
<div class="a" style="left:1226px;top:629px;width:2px;height:2px;background:#b8b8b8;"></div>
<div class="a" style="left:1229px;top:629px;width:2px;height:2px;background:#b8b8b8;"></div>
<div class="a" style="left:1232px;top:629px;width:2px;height:2px;background:#b8b8b8;"></div>
</div>
</body></html>
